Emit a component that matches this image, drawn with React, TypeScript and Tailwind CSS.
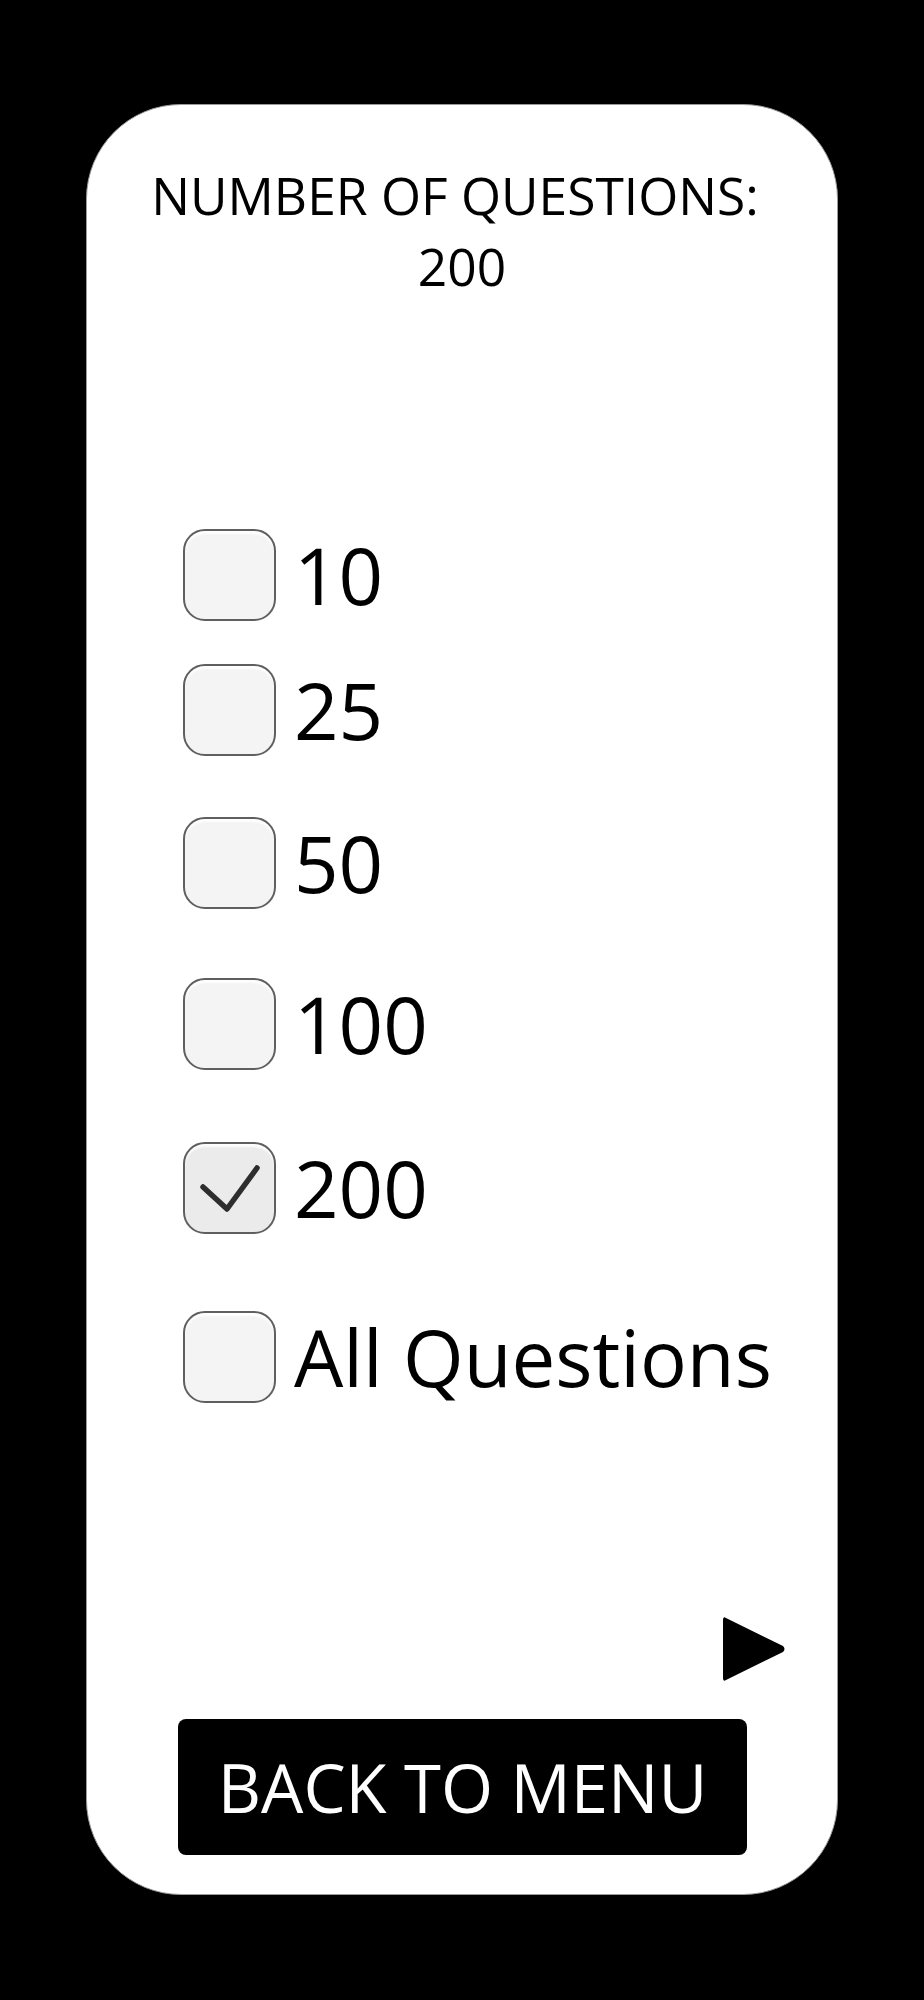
import React, { useState } from 'react';

const options = [
  { label: '10', mt: 'mt-0' },
  { label: '25', mt: 'mt-[43px]' },
  { label: '50', mt: 'mt-[61px]' },
  { label: '100', mt: 'mt-[69px]' },
  { label: '200', mt: 'mt-[72px]' },
  { label: 'All Questions', mt: 'mt-[77px]' },
];

const Box: React.FC<{ checked: boolean }> = ({ checked }) => (
  <div
    className={`w-[93px] h-[92px] flex-shrink-0 rounded-[22px] border-2 border-[#5f5f5f] shadow-[inset_0_3px_2px_rgba(255,255,255,0.9)] ${
      checked ? 'bg-[#ebebeb]' : 'bg-[#f4f4f4]'
    }`}
  >
    {checked && (
      <svg width="93" height="92" viewBox="0 0 93 92" className="-ml-[2px] -mt-[2px]">
        <path d="M20 45 L44 67 L74 26" fill="none" stroke="#2e2e2e" strokeWidth="5.5" strokeLinecap="round" strokeLinejoin="round" />
      </svg>
    )}
  </div>
);

const App: React.FC = () => {
  const [selected, setSelected] = useState('200');
  const count = selected === 'All Questions' ? 'ALL' : selected;

  return (
    <div className="bg-black min-h-[2000px] pt-[104px] pl-[86px] font-['Open_Sans',sans-serif]">
      <div className="w-[752px] h-[1791px] bg-white rounded-[95px] border border-[#9a9a9a] flex flex-col pt-[55px]">
        {/* Header */}
        <h1 className="text-[51.5px] leading-[71px] text-black text-center">
          <span className="block pr-[14px]">NUMBER OF QUESTIONS:</span>
          <span className="block">{count}</span>
        </h1>

        {/* Options */}
        <div className="mt-[227px] pl-[96px] flex flex-col">
          {options.map((opt) => (
            <button
              key={opt.label}
              onClick={() => setSelected(opt.label)}
              className={`flex items-center gap-[18px] text-left ${opt.mt}`}
            >
              <Box checked={selected === opt.label} />
              <span className="text-[78px] leading-none text-black">{opt.label}</span>
            </button>
          ))}
        </div>

        {/* Next */}
        <div className="mt-[213px] flex justify-end pr-[51px]">
          <svg width="66" height="66" viewBox="0 0 66 66">
            <path d="M3 4 Q3 0 6 2 L63 30 Q66 33 63 36 L6 64 Q3 66 3 62 Z" fill="#000" />
          </svg>
        </div>

        {/* Back */}
        <button className="mt-[37px] ml-[91px] w-[569px] h-[136px] bg-black rounded-[8px] text-white text-[67px] leading-none">
          BACK TO MENU
        </button>
      </div>
    </div>
  );
};

export default App;
